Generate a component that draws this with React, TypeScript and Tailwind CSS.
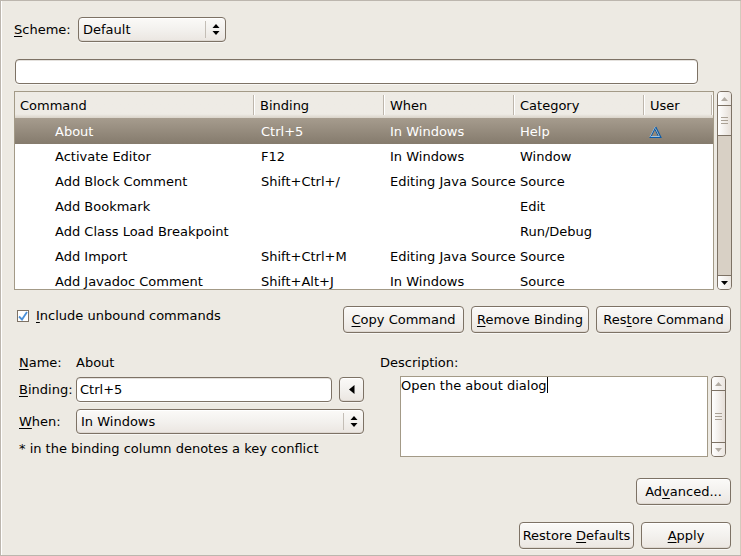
import { useState } from 'react';
import type { ReactNode } from 'react';

type Command = { name: string; binding: string; when: string; category: string; user?: boolean };

const commands: Command[] = [
  { name: 'About', binding: 'Ctrl+5', when: 'In Windows', category: 'Help', user: true },
  { name: 'Activate Editor', binding: 'F12', when: 'In Windows', category: 'Window' },
  { name: 'Add Block Comment', binding: 'Shift+Ctrl+/', when: 'Editing Java Source', category: 'Source' },
  { name: 'Add Bookmark', binding: '', when: '', category: 'Edit' },
  { name: 'Add Class Load Breakpoint', binding: '', when: '', category: 'Run/Debug' },
  { name: 'Add Import', binding: 'Shift+Ctrl+M', when: 'Editing Java Source', category: 'Source' },
  { name: 'Add Javadoc Comment', binding: 'Shift+Alt+J', when: 'In Windows', category: 'Source' },
];

const raised =
  'rounded-[4px] border border-[#7d7265] bg-linear-to-b from-[#fbfaf8] via-[#f3f1ee] to-[#ebe6e1] shadow-[0_1px_0_#f8f7f4,inset_0_1px_0_#ffffff,inset_0_-1px_0_#ded8d1]';
const sunken =
  'rounded-[4px] border border-[#7d7265] bg-white shadow-[0_1px_0_#f8f7f4,inset_0_1px_0_#e4e1dd]';

/** Underlines the keyboard mnemonic of a label. */
function Mnemonic({ children }: { children: ReactNode }) {
  return <span className="underline decoration-1 underline-offset-2">{children}</span>;
}

function PushButton({ children, className = '' }: { children: ReactNode; className?: string }) {
  return (
    <button type="button" className={`h-[27px] whitespace-nowrap ${raised} ${className}`}>
      {children}
    </button>
  );
}

function Dropdown({ id, value, className = '' }: { id: string; value: string; className?: string }) {
  return (
    <div className={`relative ${className}`}>
      <select id={id} className={`block h-[25px] w-full appearance-none pl-1 ${raised}`}>
        <option>{value}</option>
      </select>
      <div className="pointer-events-none absolute inset-y-1 right-[6px] flex items-center border-l border-[#c4beb6] pl-[6px]">
        <svg width="8" height="11" viewBox="0 0 8 11" aria-hidden="true">
          <path d="M4 0 7.5 4H.5zM4 11 .5 7h7z" fill="#000" />
        </svg>
      </div>
    </div>
  );
}

function Grip() {
  return (
    <span className="flex w-[7px] flex-col gap-[2px]">
      <i className="h-px bg-[#aaa195]" />
      <i className="h-px bg-[#aaa195]" />
      <i className="h-px bg-[#aaa195]" />
    </span>
  );
}

function ScrollArrow({ down = false, active = false }: { down?: boolean; active?: boolean }) {
  return (
    <button
      type="button"
      aria-label={down ? 'Scroll down' : 'Scroll up'}
      className="flex h-[13px] shrink-0 items-center justify-center bg-linear-to-r from-white to-[#ebe6e1]"
    >
      <svg width="7" height="4" viewBox="0 0 7 4" aria-hidden="true">
        <path d={down ? 'M0 0h7L3.5 4z' : 'M0 4h7L3.5 0z'} fill={active ? '#000' : '#b3aca3'} />
      </svg>
    </button>
  );
}

function ScrollBar({ full = false }: { full?: boolean }) {
  return (
    <div className="flex w-[15px] shrink-0 flex-col overflow-hidden rounded-[4px] border border-[#7d7265] bg-[#d8d0c5]">
      <ScrollArrow />
      <div
        className={`flex items-center justify-center border-y border-[#7d7265] bg-linear-to-r from-white to-[#e6dfd8] ${
          full ? 'flex-1' : 'h-[31px]'
        }`}
      >
        <Grip />
      </div>
      {!full && <div className="flex-1 border-b border-[#7d7265]" />}
      <ScrollArrow down active={!full} />
    </div>
  );
}

function DeltaIcon() {
  return (
    <svg width="13" height="13" viewBox="0 0 13 13" role="img" aria-label="User binding">
      <path d="M6.300.8 1 11" fill="none" stroke="#9cc4e6" strokeWidth="1" />
      <path d="M6.600 1.500 1.800 11" fill="none" stroke="#0a5aa8" strokeWidth="1" />
      <path d="M6 3.500 9.800 11" fill="none" stroke="#0a5aa8" strokeWidth="1" />
      <path d="M6.500 2.500 10.800 11" fill="none" stroke="#9cc4e6" strokeWidth=".8" />
      <path d="M6.800 1 12 11.500" fill="none" stroke="#0a5aa8" strokeWidth="1.1" />
      <path d="M2 10h8v1H2z" fill="#9cc4e6" />
      <path d="M.5 11h12v1H.5z" fill="#0a5aa8" />
    </svg>
  );
}

function CommandTable() {
  const [selected, setSelected] = useState(0);
  return (
    <div className="flex h-[199px] gap-[3px]">
      <div className="min-w-0 flex-1 overflow-hidden border border-[#a39a87] bg-white">
        <table className="w-full table-fixed border-separate border-spacing-0 text-left">
          <colgroup>
            <col />
            <col className="w-[130px]" />
            <col className="w-[130px]" />
            <col className="w-[130px]" />
            <col className="w-[69px]" />
          </colgroup>
          <thead>
            <tr className="h-[26px] bg-linear-to-b from-[#eeebe5] from-85% to-[#d9d3c9]">
              {['Command', 'Binding', 'When', 'Category', 'User'].map((title) => (
                <th key={title} scope="col" className="group p-0 font-normal">
                  <div className="flex h-5 items-center border-r border-[#bdb6ac] pt-[2px] pl-[6px] shadow-[1px_0_0_#fff] group-first:pl-[5px] group-last:mr-px">
                    {title}
                  </div>
                </th>
              ))}
            </tr>
          </thead>
          <tbody>
            {commands.map((c, i) => (
              <tr
                key={c.name}
                onClick={() => setSelected(i)}
                className={
                  i === selected
                    ? 'h-[26px] bg-linear-to-b from-[#a69c8e] to-[#857b6d] text-white *:pt-[2px]'
                    : 'h-[25px]'
                }
              >
                <td className="p-0 pl-10 whitespace-nowrap">{c.name}</td>
                <td className="p-0 pl-[7px] whitespace-nowrap">{c.binding}</td>
                <td className="p-0 pl-[6px] whitespace-nowrap">{c.when}</td>
                <td className="p-0 pl-[6px] whitespace-nowrap">{c.category}</td>
                <td className="p-0 pl-[5px]">{c.user && <DeltaIcon />}</td>
              </tr>
            ))}
          </tbody>
        </table>
      </div>
      <ScrollBar />
    </div>
  );
}

export default function App() {
  const [binding, setBinding] = useState('Ctrl+5');
  const [include, setInclude] = useState(true);
  const [description, setDescription] = useState('Open the about dialog');

  return (
    <main className="border-y border-y-[#bcb6ae] bg-[#edeae3] font-['DejaVu_Sans',sans-serif] text-[13px] leading-4 text-black">
      <div className="border-x border-r-[#d3cabd] border-l-[#bcb6ae] pt-4 pr-[8px] pb-[6px] pl-[13px] shadow-[inset_1px_0_0_#fff]">
        <div className="flex items-center gap-2">
          <label htmlFor="scheme" className="w-14">
            <Mnemonic>S</Mnemonic>cheme:
          </label>
          <Dropdown id="scheme" value="Default" className="w-[148px]" />
        </div>

        <input
          type="text"
          aria-label="Filter commands"
          className={`mt-[17px] ml-px block h-[25px] w-[calc(100%-35px)] px-1 ${sunken}`}
        />

        <div className="mt-[7px]">
          <CommandTable />
        </div>

        <div className="mt-4 flex justify-between pr-px">
          <label className="flex h-5 items-center gap-[7px] pl-[3px]">
            <input
              type="checkbox"
              checked={include}
              onChange={(e) => setInclude(e.target.checked)}
              className="peer sr-only"
            />
            <span className="flex size-3 items-center justify-center border border-[#7d7265] bg-white peer-focus-visible:outline">
              {include && (
                <svg width="10" height="10" viewBox="0 0 10 10" aria-hidden="true">
                  <path d="M1 5.500 4 8.500 9 1" fill="none" stroke="#4a90d9" strokeWidth="1.8" />
                </svg>
              )}
            </span>
            <span>
              <Mnemonic>I</Mnemonic>nclude unbound commands
            </span>
          </label>
          <div className="flex gap-[7px]">
            <PushButton className="w-[121px]">
              <Mnemonic>C</Mnemonic>opy Command
            </PushButton>
            <PushButton className="w-[118px]">
              <Mnemonic>R</Mnemonic>emove Binding
            </PushButton>
            <PushButton className="w-[135px]">
              Res<Mnemonic>t</Mnemonic>ore Command
            </PushButton>
          </div>
        </div>

        <div className="mt-[22px] flex gap-4 pr-px pl-[5px]">
          <div className="w-[345px] shrink-0">
            <div className="grid grid-cols-[57px_1fr] items-center">
              <span>
                <Mnemonic>N</Mnemonic>ame:
              </span>
              <span>About</span>
              <label htmlFor="binding" className="mt-[6px]">
                <Mnemonic>B</Mnemonic>inding:
              </label>
              <div className="mt-[6px] flex gap-[7px]">
                <input
                  id="binding"
                  type="text"
                  value={binding}
                  onChange={(e) => setBinding(e.target.value)}
                  className={`h-[25px] min-w-0 flex-1 px-[3px] ${sunken}`}
                />
                <button
                  type="button"
                  aria-label="Special keys"
                  className={`flex size-[25px] items-center justify-center ${raised}`}
                >
                  <svg width="6" height="9" viewBox="0 0 6 9" aria-hidden="true">
                    <path d="M5.500 0v9L0 4.500z" fill="#000" />
                  </svg>
                </button>
              </div>
              <label htmlFor="when" className="mt-[7px]">
                <Mnemonic>W</Mnemonic>hen:
              </label>
              <Dropdown id="when" value="In Windows" className="mt-[7px]" />
            </div>
            <p className="mt-[7px]">* in the binding column denotes a key conflict</p>
          </div>

          <div className="min-w-0 flex-1 pr-[5px]">
            <label htmlFor="description">Description:</label>
            <div className="mt-[5px] flex h-[81px] gap-[3px] pl-5">
              <div className="relative min-w-0 flex-1">
                <textarea
                  id="description"
                  value={description}
                  onChange={(e) => setDescription(e.target.value)}
                  className="block size-full resize-none overflow-hidden border border-[#a39a87] bg-white pt-px outline-none"
                />
                <span
                  aria-hidden="true"
                  className="pointer-events-none absolute top-px left-px border-r border-black whitespace-nowrap text-transparent"
                >
                  {description}
                </span>
              </div>
              <ScrollBar full />
            </div>
          </div>
        </div>

        <div className="mt-[21px] flex justify-end pr-px">
          <PushButton className="w-[95px]">
            Ad<Mnemonic>v</Mnemonic>anced...
          </PushButton>
        </div>
        <div className="mt-[17px] flex justify-end gap-[7px] pr-px">
          <PushButton className="w-[115px]">
            Restore <Mnemonic>D</Mnemonic>efaults
          </PushButton>
          <PushButton className="w-[90px]">
            <Mnemonic>A</Mnemonic>pply
          </PushButton>
        </div>
      </div>
    </main>
  );
}
